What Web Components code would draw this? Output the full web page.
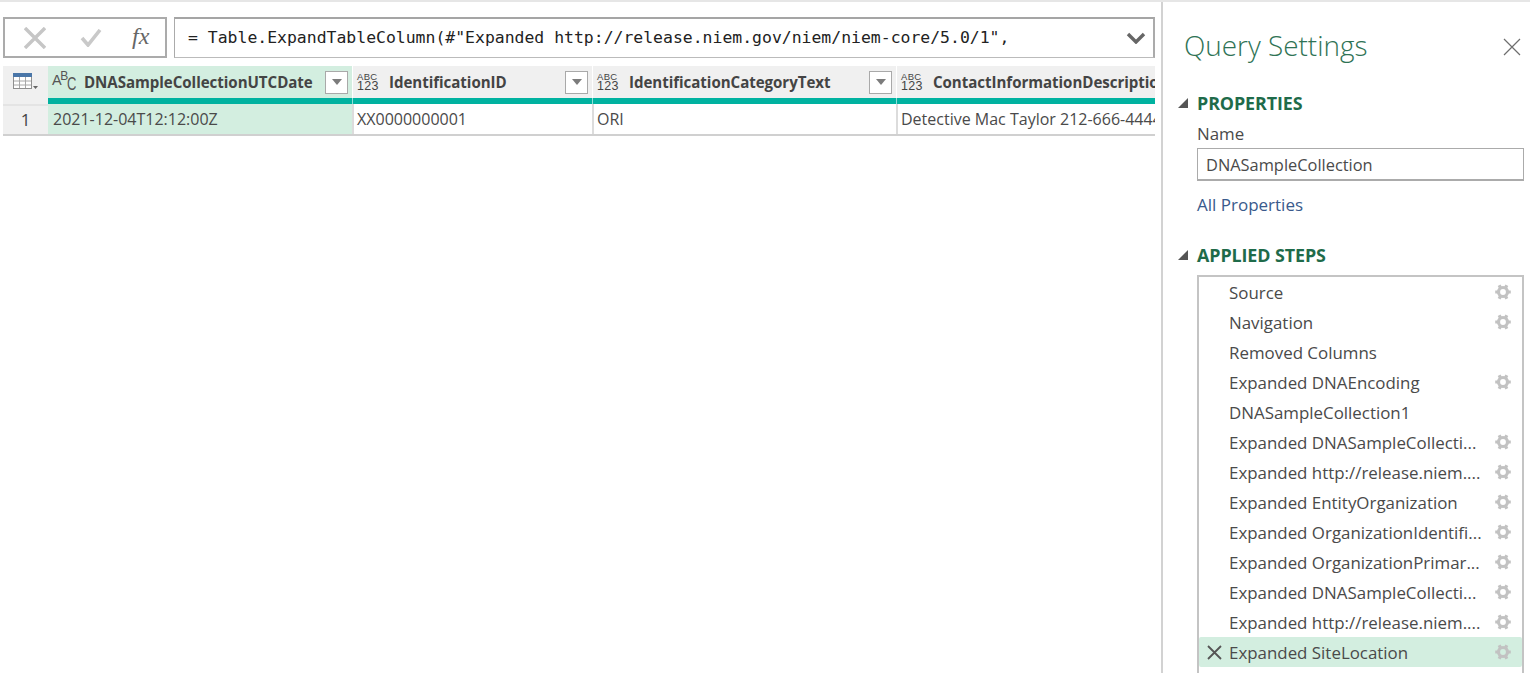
<!DOCTYPE html>
<html>
<head>
<meta charset="utf-8">
<title>Query Settings</title>
<style>
  html, body { margin: 0; height: 100%; overflow: hidden; background: #fff; }
  body { font-family: "Open Sans", "Liberation Sans", sans-serif; }
</style>
</head>
<body>
<query-editor>
  <div slot="main">
    <formula-bar formula='= Table.ExpandTableColumn(#"Expanded http://release.niem.gov/niem/niem-core/5.0/1",'></formula-bar>
    <data-grid></data-grid>
  </div>
  <query-settings slot="side"></query-settings>
</query-editor>

<script>
// engrane de los pasos: anillo con seis dientes
const gearSvg = `<svg width="18" height="18" viewBox="0 0 18 18"><g fill="none" stroke="#c2c2c2"><circle cx="9" cy="9" r="4.500" stroke-width="3.200"/><path stroke-width="3.200" d="M1.200 9h3M13.800 9h3M5.100 2.250l1.500 2.600M12.900 15.750l-1.500-2.600M12.900 2.250l-1.500 2.600M5.100 15.750l1.500-2.600"/></g></svg>`;

class queryEditor extends HTMLElement {
  constructor() {
    super();
    this.attachShadow({ mode: "open" });
    this.shadowRoot.innerHTML = `
    <style>
      :host { display: flex; height: 673px; box-sizing: border-box; border-top: 2px solid #e6e6e6; }
      .main { width: 1161px; flex: none; padding: 15px 0 0 3px; box-sizing: border-box; overflow: hidden; }
      .side { flex: 1; min-width: 0; border-left: 2px solid #d2d2d2; }
    </style>
    <div class="main"><slot name="main"></slot></div>
    <div class="side"><slot name="side"></slot></div>`;
  }
}

class formulaBar extends HTMLElement {
  constructor() {
    super();
    this.attachShadow({ mode: "open" });
  }
  connectedCallback() {
    this.shadowRoot.innerHTML = `
    <style>
      :host { display: flex; gap: 7px; height: 41px; width: 1152px; }
      .btns { width: 164px; box-sizing: border-box; border: 2px solid #ababab; display: flex; align-items: center; }
      .btns svg { display: block; }
      .x { margin-left: 19px; }
      .ok { margin-left: 34px; }
      .fx { margin-left: 30px; font: italic 24px "Liberation Serif", serif; color: #666; margin-top: -3px; }
      .box { flex: 1; min-width: 0; box-sizing: border-box; border: 2px solid #ababab; border-top-color: #a5a5a5; border-bottom-width: 1px; border-bottom-color: #bbb; border-left-width: 1px; display: flex; align-items: center; padding-left: 13px; }
      .code { flex: 1; font: 16.450px/1 "DejaVu Sans Mono", monospace; color: #222; white-space: pre; margin-top: 1px; }
      .chev { margin-right: 7px; }
    </style>
    <div class="btns">
      <svg class="x" width="22" height="22" viewBox="0 0 22 22"><path d="M1 1l20 20M21 1L1 21" stroke="#c6c6c6" stroke-width="3.400" fill="none"/></svg>
      <svg class="ok" width="22" height="18" viewBox="0 0 22 18"><path d="M2 9l6 7L20 1" stroke="#c9c9c9" stroke-width="3.600" fill="none"/></svg>
      <span class="fx">fx</span>
    </div>
    <div class="box">
      <span class="code">${this.getAttribute("formula").replace(/&/g, "&amp;").replace(/</g, "&lt;")}</span>
      <svg class="chev" width="20" height="12" viewBox="0 0 20 12"><path d="M2 2l8 8 8-8" stroke="#666" stroke-width="3.400" fill="none"/></svg>
    </div>`;
  }
}

class dataGrid extends HTMLElement {
  constructor() {
    super();
    this.attachShadow({ mode: "open" });
  }
  connectedCallback() {
    const cols = [
      { name: "DNASampleCollectionUTCDate", value: "2021-12-04T12:12:00Z", width: 304, type: "text", selected: true },
      { name: "IdentificationID", value: "XX0000000001", width: 240, type: "any" },
      { name: "IdentificationCategoryText", value: "ORI", width: 304, type: "any" },
      { name: "ContactInformationDescriptionText", value: "Detective Mac Taylor 212-666-4444", width: 259, type: "any", last: true }
    ];
    let htmlContenido = "";
    for (let i = 0; i < cols.length; i++) {
      const c = cols[i];
      htmlContenido += `
        <grid-column name="${c.name}" value="${c.value}" type="${c.type}" style="width:${c.width}px"
          ${c.selected ? "selected" : ""} ${c.last ? "last" : ""}></grid-column>`;
    }
    this.shadowRoot.innerHTML = `
    <style>
      :host { display: flex; width: 1152px; height: 70px; margin-top: 8px; overflow: hidden; }
      .corner { width: 45px; flex: none; box-sizing: border-box; background: #f0f0f0; height: 70px; border-bottom: 2px solid #d0d0d0; display: flex; flex-direction: column; }
      .tbl { height: 32px; display: flex; align-items: center; padding-left: 10px; box-sizing: border-box; }
      .num { flex: 1; margin-top: 6px; border-top: 2px solid #e4e4e4; font-size: 17px; color: #444; text-align: center; line-height: 27px; }
    </style>
    <div class="corner">
      <div class="tbl">
        <svg width="26" height="18" viewBox="0 0 26 18">
          <rect x=".5" y=".5" width="18" height="15" fill="#fff" stroke="#8f8f8f"/>
          <rect x="0" y="0" width="19" height="4" fill="#4a76a8"/>
          <path d="M6.500 4v11M12.500 4v11M1 8h17M1 12h17" stroke="#a8a8a8" fill="none"/>
          <path d="M20 13h5l-2.500 3z" fill="#666"/>
        </svg>
      </div>
      <div class="num">1</div>
    </div>
    ${htmlContenido}`;
  }
}

class gridColumn extends HTMLElement {
  constructor() {
    super();
    this.attachShadow({ mode: "open" });
  }
  connectedCallback() {
    const type = this.getAttribute("type") === "text"
      ? `<span class="t-abc"><b>A</b><b class="b">B</b><b class="c">C</b></span>`
      : `<span class="t-any"><span>ABC</span><span>123</span></span>`;
    this.shadowRoot.innerHTML = `
    <style>
      :host { display: flex; flex-direction: column; flex: none; box-sizing: border-box; height: 70px; border-bottom: 2px solid #d0d0d0; overflow: hidden; }
      .head { height: 32px; flex: none; background: #f0f0f0; display: flex; align-items: center; padding: 0 4px 0 4px; box-sizing: border-box; border-left: 1px solid #fff; }
      :host([selected]) .head { background: #d3eee0; border-left: 0; }
      .t-abc { width: 32px; flex: none; color: #555; line-height: 1; white-space: nowrap; display: flex; font-family: "Liberation Sans", sans-serif; }
      .t-abc b { font-weight: 400; font-size: 14.500px; position: relative; top: 0; }
      .t-abc .b { font-size: 12px; top: -3px; margin-left: -1.500px; }
      .t-abc .c { font-size: 18px; top: 2px; transform: scaleX(.72); transform-origin: left; margin-left: -1px; }
      .t-any { width: 32px; flex: none; display: flex; flex-direction: column; color: #444; line-height: 1; font-family: "Liberation Sans", sans-serif; }
      .t-any span:first-child { font-size: 9.500px; letter-spacing: .3px; }
      .t-any span:last-child { font-size: 12.500px; margin-top: -1px; letter-spacing: .3px; }
      .name { flex: 1; min-width: 0; font-size: 15.100px; font-weight: 700; color: #444; white-space: nowrap; overflow: hidden; letter-spacing: -.05px; }
      .drop { width: 23px; height: 23px; box-sizing: border-box; flex: none; background: #fff; border: 1px solid #a9a9a9; display: flex; align-items: center; justify-content: center; }
      .drop i { border: 5px solid transparent; border-top: 6px solid #7c7c7c; border-bottom: 0; }
      :host([last]) .drop { display: none; }
      :host([last]) .head { padding-right: 0; }
      .bar { height: 6px; flex: none; background: #00b2a0; border-left: 1px solid #8fe0d8; }
      :host([selected]) .bar { border-left: 0; }
      .val { flex: 1; display: flex; align-items: center; padding-left: 3px; font-size: 16px; color: #4a4a4a; white-space: nowrap; overflow: hidden; border-left: 2px solid #dcdcdc; }
      :host([selected]) .val { background: #d3eee0; padding-left: 5px; border-left: 0; }
    </style>
    <div class="head">${type}<span class="name">${this.getAttribute("name")}</span><span class="drop"><i></i></span></div>
    <div class="bar"></div>
    <div class="val">${this.getAttribute("value")}</div>`;
  }
}

class querySettings extends HTMLElement {
  constructor() {
    super();
    this.attachShadow({ mode: "open" });
    const steps = [
      ["Source", 1], ["Navigation", 1], ["Removed Columns", 0], ["Expanded DNAEncoding", 1],
      ["DNASampleCollection1", 0], ["Expanded DNASampleCollecti...", 1], ["Expanded http://release.niem....", 1],
      ["Expanded EntityOrganization", 1], ["Expanded OrganizationIdentifi...", 1], ["Expanded OrganizationPrimar...", 1],
      ["Expanded DNASampleCollecti...", 1], ["Expanded http://release.niem....", 1], ["Expanded SiteLocation", 1, 1]
    ];
    let rows = "";
    for (const s of steps) {
      rows += `<step-item ${s[1] ? "gear" : ""} ${s[2] ? "active" : ""}>${s[0]}</step-item>`;
    }
    this.shadowRoot.innerHTML = `
    <style>
      :host { display: block; height: 100%; box-sizing: border-box; padding: 24px 6px 0 15px; color: #444; overflow: hidden; }
      .top { display: flex; justify-content: space-between; align-items: center; padding-left: 6px; padding-right: 3px; }
      .top svg { margin-top: 3px; }
      h1 { margin: 0; font-size: 27.900px; line-height: 38px; font-weight: 300; color: #2f7355; }
      .label { font-size: 16.900px; line-height: 22px; margin: 0 0 3px 19px; color: #4a4a4a; }
      .input { margin-left: 19px; height: 33px; box-sizing: border-box; border: 1px solid #ababab; border-bottom-width: 2px; padding-left: 8px; font-size: 16.400px; line-height: 32px; color: #4a4a4a; }
      .link { display: block; margin: 12px 0 0 19px; font-size: 17px; line-height: 24px; color: #3a5a8c; }
      .list { margin: 0 0 0 19px; border: 2px solid #c4c4c4; border-bottom: 0; height: 420px; box-sizing: border-box; }
    </style>
    <div class="top">
      <h1>Query Settings</h1>
      <svg width="18" height="18" viewBox="0 0 18 18"><path d="M1 1l16 16M17 1L1 17" stroke="#6e6e6e" stroke-width="1.200" fill="none"/></svg>
    </div>
    <settings-heading style="margin-top:27px">PROPERTIES</settings-heading>
    <div class="label">Name</div>
    <div class="input">DNASampleCollection</div>
    <a class="link">All Properties</a>
    <settings-heading style="margin-top:26px">APPLIED STEPS</settings-heading>
    <div class="list">${rows}</div>`;
  }
}

class settingsHeading extends HTMLElement {
  constructor() {
    super();
    this.attachShadow({ mode: "open" });
    this.shadowRoot.innerHTML = `
    <style>
      :host { display: flex; align-items: center; height: 24px; margin-bottom: 8px; }
      i { width: 0; height: 0; border-left: 10px solid transparent; border-bottom: 10px solid #555; margin-right: 9px; }
      span { font-size: 17.900px; font-weight: 700; color: #1f6b4a; letter-spacing: -.1px; }
    </style>
    <i></i><span><slot></slot></span>`;
  }
}

class stepItem extends HTMLElement {
  constructor() {
    super();
    this.attachShadow({ mode: "open" });
  }
  connectedCallback() {
    const active = this.hasAttribute("active");
    this.shadowRoot.innerHTML = `
    <style>
      :host { display: flex; align-items: center; height: 30px; font-size: 16.900px; color: #4a4a4a; white-space: nowrap; }
      :host([active]) { background: #d3eee0; border-radius: 2px; }
      .mark { width: 29px; flex: none; display: flex; justify-content: center; padding-left: 1px; margin-right: 1px; box-sizing: border-box; }
      .txt { flex: 1; min-width: 0; }
      .gear { width: 18px; height: 18px; margin-right: 10px; flex: none; margin-top: -1px; }
    </style>
    <span class="mark">${active ? `<svg width="15" height="15" viewBox="0 0 15 15"><path d="M1 1l13 13M14 1L1 14" stroke="#555" stroke-width="1.800" fill="none"/></svg>` : ""}</span>
    <span class="txt"><slot></slot></span>
    <span class="gear">${this.hasAttribute("gear") ? gearSvg : ""}</span>`;
  }
}

customElements.define("query-editor", queryEditor);
customElements.define("formula-bar", formulaBar);
customElements.define("data-grid", dataGrid);
customElements.define("grid-column", gridColumn);
customElements.define("query-settings", querySettings);
customElements.define("settings-heading", settingsHeading);
customElements.define("step-item", stepItem);
</script>
</body>
</html>
